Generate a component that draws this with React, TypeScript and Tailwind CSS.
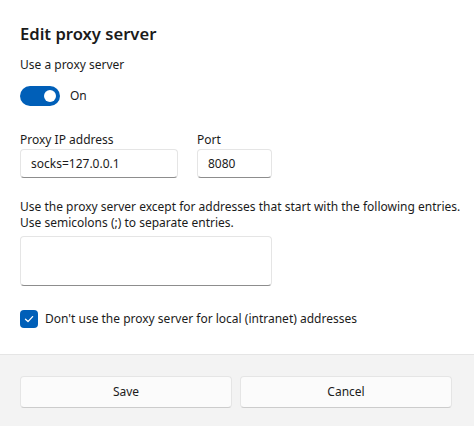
import { useState } from "react";

export default function App() {
  const [on, setOn] = useState(true);
  const [local, setLocal] = useState(true);

  return (
    <div
      className="w-[474px] h-[426px] bg-white flex flex-col text-[#1b1b1b]"
      style={{ fontFamily: '"Segoe UI", "Noto Sans", sans-serif' }}
    >
      <div className="flex-1 px-5 pt-[21px]">
        <h1 className="text-[16.6px] leading-[26px] font-semibold">Edit proxy server</h1>

        <p className="mt-[8px] text-[12px] leading-[20px]">Use a proxy server</p>

        {/* Toggle */}
        <div className="mt-[11px] flex items-center gap-[10px]">
          <button
            onClick={() => setOn((v) => !v)}
            className={`w-[40px] h-[20px] rounded-full flex items-center px-[4px] ${
              on ? "bg-[#005fb8] justify-end" : "border border-[#8a8a8a] justify-start"
            }`}
          >
            <span className={`w-[12px] h-[12px] rounded-full ${on ? "bg-white" : "bg-[#5d5d5d]"}`} />
          </button>
          <span className="text-[12px] leading-[20px]">{on ? "On" : "Off"}</span>
        </div>

        {/* Address + port */}
        <div className="mt-[25px] flex gap-[19px]">
          <div className="flex flex-col">
            <label className="text-[12px] leading-[18px]">Proxy IP address</label>
            <div className="w-[158px] h-[29px] rounded-[4px] border border-[#e5e5e5] border-b-[#8d8d8d] bg-white flex items-center px-[10px] text-[12px]">
              socks=127.0.0.1
            </div>
          </div>
          <div className="flex flex-col">
            <label className="text-[12px] leading-[18px]">Port</label>
            <div className="w-[75px] h-[29px] rounded-[4px] border border-[#e5e5e5] border-b-[#8d8d8d] bg-white flex items-center px-[10px] text-[12px]">
              8080
            </div>
          </div>
        </div>

        <p className="mt-[21px] text-[12px] leading-[16px] whitespace-nowrap">
          Use the proxy server except for addresses that start with the following entries.
          <br />
          Use semicolons (;) to separate entries.
        </p>

        <div className="mt-[5px] w-[252px] h-[50px] rounded-[4px] border border-[#e5e5e5] border-b-[#8d8d8d] bg-white" />

        {/* Checkbox */}
        <label className="mt-[23px] flex items-center gap-[7px] cursor-pointer">
          <button
            onClick={() => setLocal((v) => !v)}
            className={`w-[18px] h-[18px] rounded-[4px] flex items-center justify-center ${
              local ? "bg-[#005fb8]" : "border border-[#8a8a8a]"
            }`}
          >
            {local && (
              <svg width="12" height="12" viewBox="0 0 12 12" fill="none">
                <path d="M2.5 6.3 L5 8.6 L9.6 3.6" stroke="white" strokeWidth="1.3" strokeLinecap="round" strokeLinejoin="round" />
              </svg>
            )}
          </button>
          <span className="text-[12px] leading-[20px]">
            Don't use the proxy server for local (intranet) addresses
          </span>
        </label>
      </div>

      {/* Footer */}
      <div className="h-[72px] bg-[#f3f3f3] border-t border-[#e5e5e5] flex items-start gap-[8px] pt-[21px] pl-5 pr-[22px]">
        <button className="flex-1 h-[32px] rounded-[4px] bg-[#fbfbfb] border border-[#e5e5e5] border-b-[#cccccc] text-[12px]">
          Save
        </button>
        <button className="flex-1 h-[32px] rounded-[4px] bg-[#fbfbfb] border border-[#e5e5e5] border-b-[#cccccc] text-[12px]">
          Cancel
        </button>
      </div>
    </div>
  );
}
